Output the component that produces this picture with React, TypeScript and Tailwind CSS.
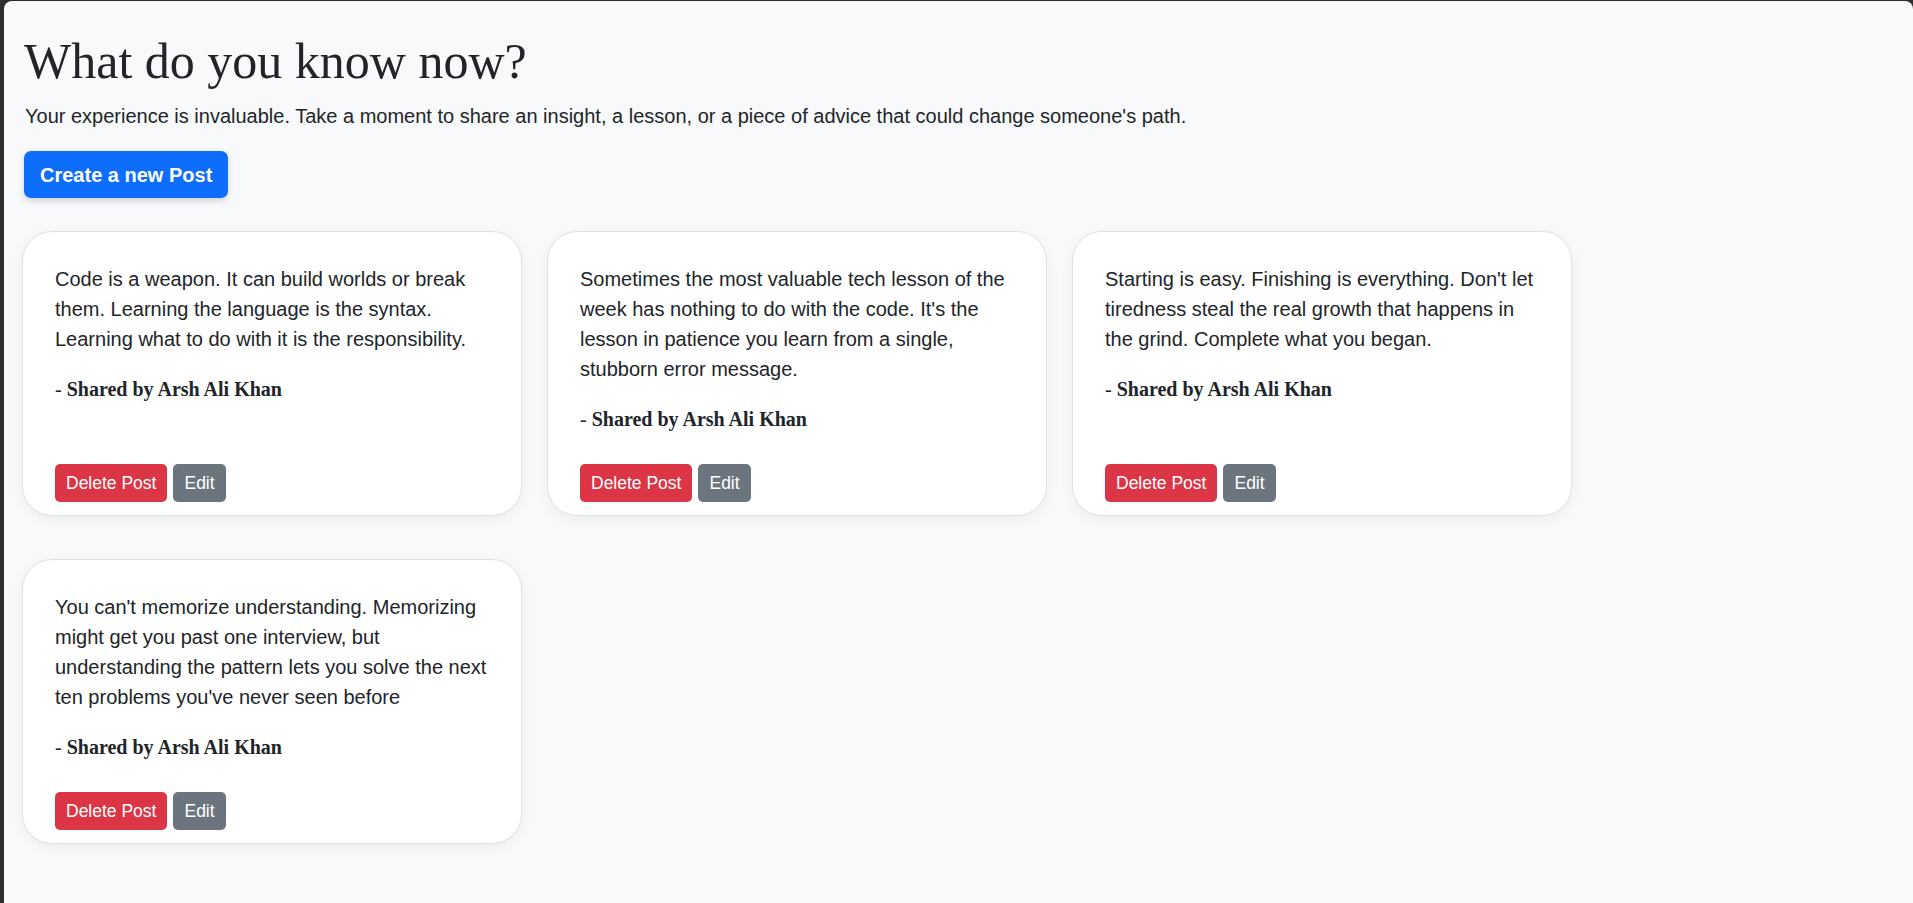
const posts = [
	{
		id: 1,
		text: "Code is a weapon. It can build worlds or break them. Learning the language is the syntax. Learning what to do with it is the responsibility.",
		author: "Arsh Ali Khan",
	},
	{
		id: 2,
		text: "Sometimes the most valuable tech lesson of the week has nothing to do with the code. It's the lesson in patience you learn from a single, stubborn error message.",
		author: "Arsh Ali Khan",
	},
	{
		id: 3,
		text: "Starting is easy. Finishing is everything. Don't let tiredness steal the real growth that happens in the grind. Complete what you began.",
		author: "Arsh Ali Khan",
	},
	{
		id: 4,
		text: "You can't memorize understanding. Memorizing might get you past one interview, but understanding the pattern lets you solve the next ten problems you've never seen before",
		author: "Arsh Ali Khan",
	},
];

const PostCard = ({ text, author }: { text: string; author: string }) => {
	return (
		<div className="w-[500px] flex flex-col bg-white border border-[#dfe1e4] rounded-[30px] shadow-[0_4px_14px_rgba(0,0,0,0.05)] pt-[32px] px-[32px] pb-[13px]">
			<p className="text-[20px] leading-[30px] mb-[20px]">{text}</p>
			<p className="font-['Liberation_Serif',serif] text-[20px] leading-[30px]">
				- <strong className="font-bold">Shared by {author}</strong>
			</p>

			{/* ACTIONS */}
			<div className="mt-auto pt-[30px] flex gap-[6px]">
				<button className="h-[38px] px-[11px] text-[17.5px] leading-[26px] text-white bg-[#dc3545] rounded-[5px]">
					Delete Post
				</button>
				<button className="h-[38px] px-[11px] text-[17.5px] leading-[26px] text-white bg-[#6c757d] rounded-[5px]">
					Edit
				</button>
			</div>
		</div>
	);
};

const App = () => {
	return (
		<div className="min-h-screen bg-[#2e2e2e] pl-[4px] pt-[1px] font-['Liberation_Sans',Arial,sans-serif] text-[#212529]">
			<div className="min-h-[902px] bg-[#f8f9fa] rounded-t-[8px] px-[20px] pt-[30px] pb-[40px]">
				<h1 className="font-['Liberation_Serif',serif] text-[50px] leading-[60px] mb-[10px]">
					What do you know now?
				</h1>
				<p className="text-[20px] leading-[30px] mb-[20px] ml-[1px]">
					Your experience is invaluable. Take a moment to share an insight, a lesson, or a piece of advice that could change someone's path.
				</p>
				<button className="h-[47px] px-[16px] text-[20px] font-bold text-white bg-[#0d6efd] rounded-[7px] shadow-[0_3px_6px_rgba(0,0,0,0.15)]">
					Create a new Post
				</button>

				<div className="mt-[33px] -ml-[2px] grid grid-cols-[repeat(3,500px)] gap-x-[25px] gap-y-[43px]">
					{posts.map((post) => (
						<PostCard key={post.id} text={post.text} author={post.author} />
					))}
				</div>
			</div>
		</div>
	);
};

export default App;
